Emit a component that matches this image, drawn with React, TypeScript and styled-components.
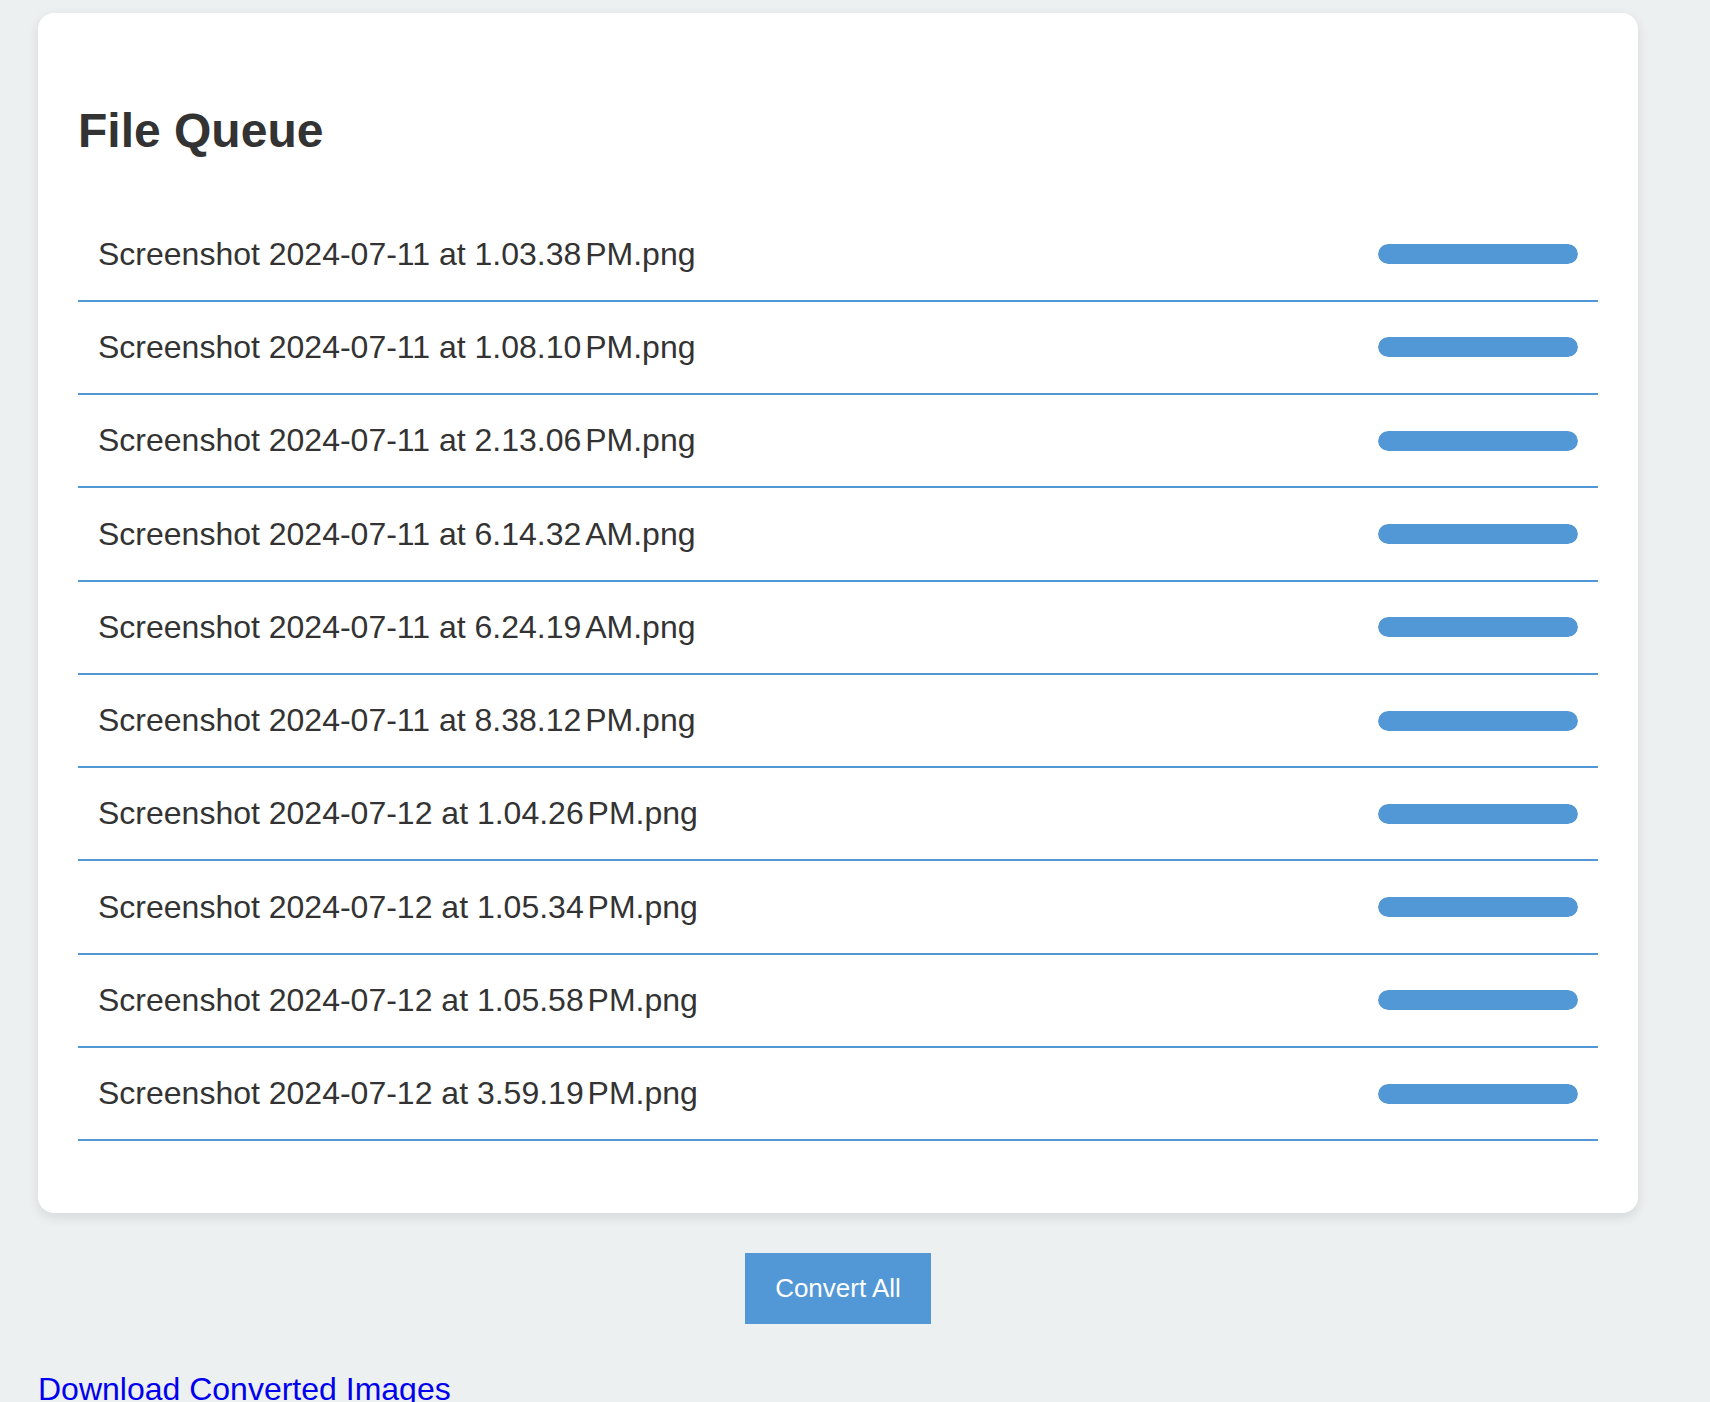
import React from "react";
import styled, { createGlobalStyle } from "styled-components";

const GlobalStyle = createGlobalStyle`
  html, body {
    margin: 0;
    padding: 0;
    background: #ecf0f1;
  }
  body {
    font-family: "Liberation Sans", Arial, sans-serif;
    color: #333;
  }
`;

const Page = styled.div`
  width: 1600px;
  padding: 13px 0 0 38px;
  display: flex;
  flex-direction: column;
`;

const Card = styled.section`
  background: #fff;
  border-radius: 16px;
  box-shadow: 0 4px 12px rgba(0, 0, 0, 0.1);
  padding: 40px;
`;

const Title = styled.h2`
  margin: 49.5px 0 50.7px;
  font-size: 48px;
  line-height: 55.2px;
  font-weight: 700;
  color: #333;
`;

const List = styled.ul`
  list-style: none;
  margin: 0 0 32px;
  padding: 0;
`;

const Row = styled.li`
  display: flex;
  align-items: center;
  justify-content: space-between;
  padding: 27.25px 20px;
  border-bottom: 2px solid #5297d6;
`;

const FileName = styled.span`
  font-size: 32px;
  line-height: 36.8px;
  color: #333;
`;

const NarrowGap = styled.span`
  letter-spacing: -2.5px;
`;

const Progress = styled.div`
  width: 200px;
  height: 20px;
  border-radius: 10px;
  background: #e3e3e3;
  overflow: hidden;
`;

const ProgressFill = styled.div`
  height: 100%;
  background: #5297d6;
  border-radius: 10px;
`;

const Actions = styled.div`
  display: flex;
  justify-content: center;
  margin-top: 40px;
`;

const ConvertButton = styled.button`
  background: #5297d6;
  color: #fff;
  border: none;
  border-radius: 0;
  font-family: "Liberation Sans", Arial, sans-serif;
  font-size: 26px;
  line-height: 31px;
  height: 71px;
  padding: 0 30.5px;
  cursor: pointer;
`;

const DownloadLink = styled.a`
  margin-top: 47px;
  align-self: flex-start;
  font-size: 32px;
  line-height: 36.8px;
  color: #0000ee;
  text-decoration: underline;
`;

const files: [string, string][] = [
  ["Screenshot 2024-07-11 at 1.03.38", "PM.png"],
  ["Screenshot 2024-07-11 at 1.08.10", "PM.png"],
  ["Screenshot 2024-07-11 at 2.13.06", "PM.png"],
  ["Screenshot 2024-07-11 at 6.14.32", "AM.png"],
  ["Screenshot 2024-07-11 at 6.24.19", "AM.png"],
  ["Screenshot 2024-07-11 at 8.38.12", "PM.png"],
  ["Screenshot 2024-07-12 at 1.04.26", "PM.png"],
  ["Screenshot 2024-07-12 at 1.05.34", "PM.png"],
  ["Screenshot 2024-07-12 at 1.05.58", "PM.png"],
  ["Screenshot 2024-07-12 at 3.59.19", "PM.png"],
];

export default function App() {
  return (
    <>
      <GlobalStyle />
      <Page>
        <Card>
          <Title>File Queue</Title>
          <List>
            {files.map(([head, tail]) => (
              <Row key={head + tail}>
                <FileName>
                  {head}
                  <NarrowGap>{"\u202F"}</NarrowGap>
                  {tail}
                </FileName>
                <Progress>
                  <ProgressFill style={{ width: "100%" }} />
                </Progress>
              </Row>
            ))}
          </List>
        </Card>
        <Actions>
          <ConvertButton>Convert All</ConvertButton>
        </Actions>
        <DownloadLink href="#">Download Converted Images</DownloadLink>
      </Page>
    </>
  );
}
